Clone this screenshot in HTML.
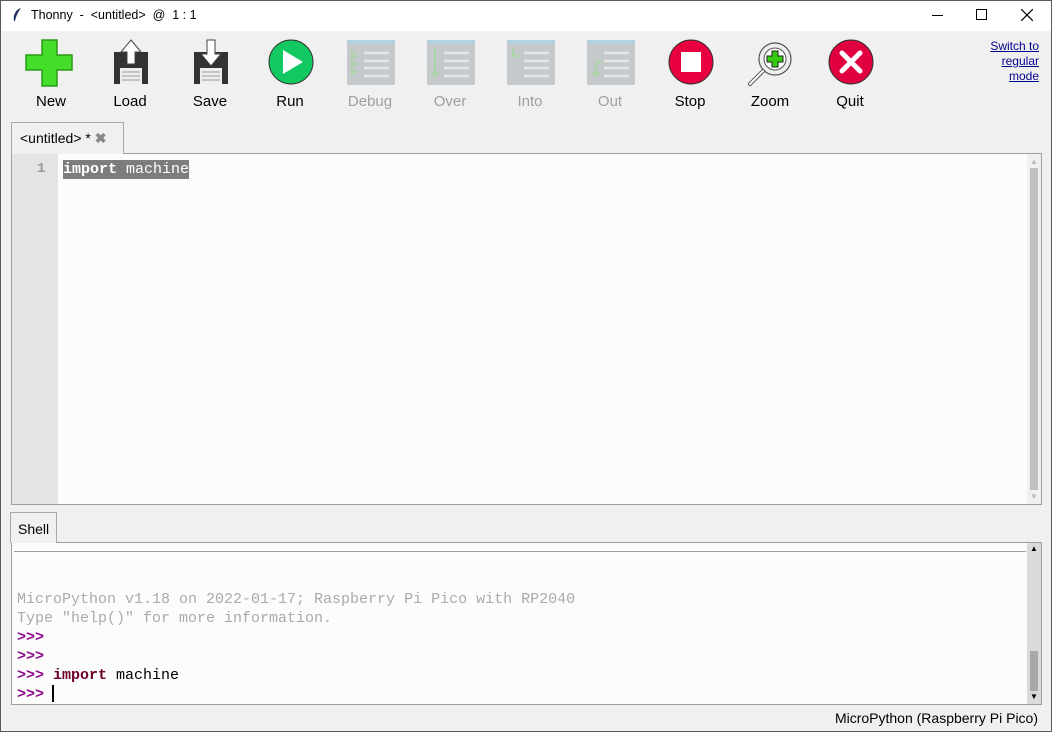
<!DOCTYPE html>
<html><head><style>
*{margin:0;padding:0;box-sizing:border-box}
body{width:1052px;height:732px;background:#f0f0f0;font-family:"Liberation Sans",sans-serif;position:relative;overflow:hidden}
.abs{position:absolute}
.title{left:0;top:0;width:1052px;height:31px;background:#fff}
.tb{font-size:15px;color:#000;text-align:center;width:80px}
.dis{color:#a0a0a0}
.mono{font-family:"Liberation Mono",monospace;font-size:15px;white-space:pre}
.kw{font-weight:bold}
</style></head><body>
<div class="abs title">
 <svg class="abs" style="left:11px;top:7px" width="12" height="16"><path d="M10 1 C4 3 2 9 3 14 L4 14 C5 9 7 5 10 1Z" fill="#1a2a5a"/></svg>
 <div class="abs" style="left:31px;top:8px;font-size:12.5px">Thonny &nbsp;-&nbsp; &lt;untitled&gt; &nbsp;@ &nbsp;1 : 1</div>
 <div class="abs" style="left:932px;top:15px;width:11px;height:1px;background:#000"></div>
 <div class="abs" style="left:976px;top:9px;width:11px;height:11px;border:1px solid #000"></div>
 <svg class="abs" style="left:1021px;top:9px" width="12" height="12"><path d="M0 0L12 12M12 0L0 12" stroke="#000" stroke-width="1.2"/></svg>
</div>

<svg class="abs" style="left:0;top:38px" width="900" height="54">
 <path d="M42 2h15v15h15v15H57v16H42V32H26V17h16z" fill="#44dd2a" stroke="#2b9a18" stroke-width="1.5"/>
 <g transform="translate(114,2)"><rect x="0" y="12" width="34" height="32" fill="#333"/><rect x="6" y="28" width="22" height="16" fill="#eee"/><path d="M8 32h18M8 36h18M8 40h18" stroke="#999"/><path d="M17 0L27 12H21V24H13V12H7Z" fill="#fff" stroke="#444"/></g>
 <g transform="translate(194,2)"><rect x="0" y="12" width="34" height="32" fill="#333"/><rect x="6" y="28" width="22" height="16" fill="#eee"/><path d="M8 32h18M8 36h18M8 40h18" stroke="#999"/><path d="M13 0h8v14h6L17 26 7 14h6Z" fill="#fff" stroke="#444"/></g>
 <circle cx="291" cy="24" r="22" fill="#12c860" stroke="#333" stroke-width="1"/><path d="M283 12L303 24 283 36Z" fill="#fff"/>
 <g fill="#c6c9cc"><rect x="347" y="2" width="48" height="45" rx="2"/><rect x="427" y="2" width="48" height="45" rx="2"/><rect x="507" y="2" width="48" height="45" rx="2"/><rect x="587" y="2" width="48" height="45" rx="2"/></g>
 <g fill="#b5d3de"><rect x="347" y="2" width="48" height="4"/><rect x="427" y="2" width="48" height="4"/><rect x="507" y="2" width="48" height="4"/><rect x="587" y="2" width="48" height="4"/></g>
 <g stroke="#e6e6e6" stroke-width="2.5"><path d="M364 15h25M364 23h25M364 30h25M364 38h25M444 15h25M444 23h25M444 30h25M444 38h25M524 15h25M524 23h25M524 30h25M524 38h25M604 15h25M604 23h25M604 30h25M604 38h25"/></g>
 <g stroke="#a9d6a4" stroke-width="2" fill="none"><path d="M352 12v26M352 18h6M352 26h6M352 34h6M435 10v28M431 34l4 4 4-4M513 10v8h6M596 24v14M596 24h6M592 34l4 4 4-4"/></g>
 <circle cx="691" cy="24" r="22" fill="#e8003f" stroke="#333"/><rect x="681" y="14" width="20" height="20" fill="#fff"/>
 <circle cx="775" cy="21" r="16" fill="#eee" stroke="#555" stroke-width="1.2"/><circle cx="775" cy="21" r="11" fill="#fff" stroke="#555"/>
 <path d="M772 13h6v5h5v6h-5v5h-6v-5h-5v-6h5z" fill="#33cc11" stroke="#222"/>
 <path d="M763 33L750 46" stroke="#555" stroke-width="4" stroke-linecap="round"/><path d="M763 33L750 46" stroke="#fff" stroke-width="2" stroke-linecap="round"/>
 <circle cx="851" cy="24" r="22" fill="#e0003f" stroke="#333"/><path d="M842 15l18 18M860 15l-18 18" stroke="#fff" stroke-width="5" stroke-linecap="round"/>
</svg>
<div class="abs tb" style="left:11px;top:93px">New</div>
<div class="abs tb" style="left:90px;top:93px">Load</div>
<div class="abs tb" style="left:170px;top:93px">Save</div>
<div class="abs tb" style="left:250px;top:93px">Run</div>
<div class="abs tb dis" style="left:330px;top:93px">Debug</div>
<div class="abs tb dis" style="left:410px;top:93px">Over</div>
<div class="abs tb dis" style="left:490px;top:93px">Into</div>
<div class="abs tb dis" style="left:570px;top:93px">Out</div>
<div class="abs tb" style="left:650px;top:93px">Stop</div>
<div class="abs tb" style="left:730px;top:93px">Zoom</div>
<div class="abs tb" style="left:810px;top:93px">Quit</div>
<div class="abs" style="right:13px;top:39px;font-size:12px;line-height:15px;text-align:right;color:#00008b;text-decoration:underline">Switch to<br>regular<br>mode</div>

<div class="abs" style="left:11px;top:122px;width:113px;height:32px;background:#f0f0f0;border:1px solid #a8a8a8;border-bottom:none;z-index:2;font-size:14px;padding:7px 0 0 8px">&lt;untitled&gt; * <span style="color:#888;font-weight:bold">✖</span></div>
<div class="abs" style="left:11px;top:153px;width:1031px;height:352px;border:1px solid #a0a0a0;background:#fcfcfc">
 <div class="abs" style="left:0;top:0;width:46px;height:350px;background:#e4e4e4"></div>
 <div class="abs mono" style="left:25px;top:7px;color:#999;font-weight:bold;font-size:14px">1</div>
 <div class="abs mono" style="left:51px;top:6px;background:#7d7d7d;color:#fff;height:19px;line-height:19px"><span class="kw">import</span> machine</div>
 <div class="abs" style="left:1015px;top:0;width:14px;height:350px;background:#f0f0f0"></div>
 <div class="abs" style="left:1018px;top:14px;width:8px;height:322px;background:#c0c0c0"></div>
 <div class="abs" style="left:1018px;top:3px;font-size:8px;color:#bbb">▲</div>
 <div class="abs" style="left:1018px;top:338px;font-size:8px;color:#bbb">▼</div>
</div>

<div class="abs" style="left:10px;top:512px;width:47px;height:31px;background:#f0f0f0;border:1px solid #a8a8a8;border-bottom:none;z-index:2;font-size:14px;padding:8px 0 0 7px">Shell</div>
<div class="abs" style="left:11px;top:542px;width:1031px;height:163px;border:1px solid #a0a0a0;background:#fcfcfc">
 <div class="abs" style="left:2px;top:8px;width:1012px;height:1px;background:#a0a0a0"></div>
 <div class="abs mono" style="left:5px;top:47px;line-height:19px;color:#aaa">MicroPython v1.18 on 2022-01-17; Raspberry Pi Pico with RP2040
Type "help()" for more information.
<span style="color:#8a0a8a;font-weight:bold">&gt;&gt;&gt;</span>
<span style="color:#8a0a8a;font-weight:bold">&gt;&gt;&gt;</span>
<span style="color:#8a0a8a;font-weight:bold">&gt;&gt;&gt; </span><span style="color:#6a002a;font-weight:bold">import</span><span style="color:#000"> machine</span>
<span style="color:#8a0a8a;font-weight:bold">&gt;&gt;&gt; </span></div>
 <div class="abs" style="left:40px;top:142px;width:2px;height:17px;background:#000"></div>
 <div class="abs" style="left:1015px;top:0;width:14px;height:161px;background:#dadada"></div>
 <div class="abs" style="left:1018px;top:108px;width:8px;height:40px;background:#a8a8a8"></div>
 <div class="abs" style="left:1018px;top:1px;font-size:8px;color:#000">▲</div>
 <div class="abs" style="left:1018px;top:149px;font-size:8px;color:#000">▼</div>
</div>
<div class="abs" style="right:14px;top:710px;font-size:14px">MicroPython (Raspberry Pi Pico)</div>
<div class="abs" style="left:0;top:0;width:1052px;height:732px;border:1px solid #5a5a5a;pointer-events:none"></div>
</body></html>
